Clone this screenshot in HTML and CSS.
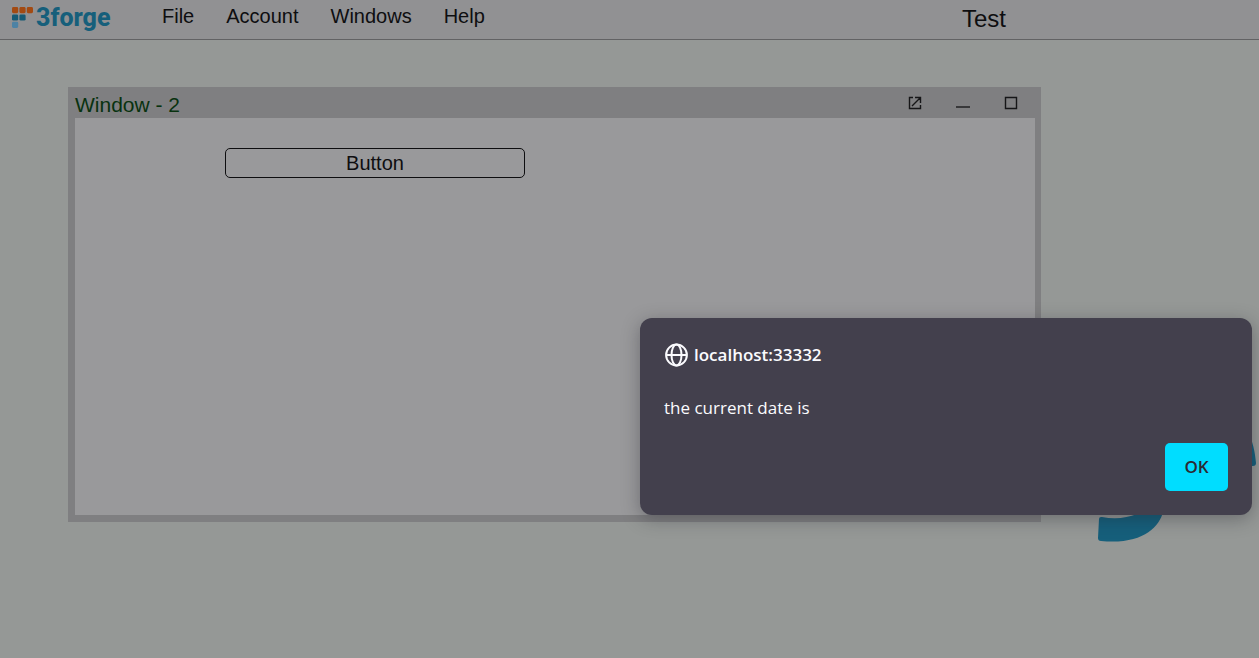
FILE: index.html
```html
<!DOCTYPE html>
<html lang="en">
<head>
<meta charset="utf-8">
<meta name="viewport" content="width=device-width, initial-scale=1">
<title>Test</title>
<link rel="stylesheet" href="styles.css">
</head>
<body>
<header class="topbar">
  <a class="brand" href="#">
    <svg class="brand-mark" viewBox="0 0 22 21" aria-hidden="true">
      <g fill="#a34a12"><rect x="0" y="0" width="6.2" height="6.2" rx="1.4"/><rect x="7.4" y="0" width="6.2" height="6.2" rx="1.4"/><rect x="14.8" y="0" width="6.2" height="6.2" rx="1.4"/></g>
      <g fill="#165a75"><rect x="0" y="7.4" width="6.2" height="6.2" rx="1.4"/><rect x="7.4" y="7.4" width="6.2" height="6.2" rx="1.4"/></g>
      <rect x="0" y="14.8" width="6.2" height="6.2" rx="1.4" fill="#4d82a4"/>
    </svg>
    <span class="brand-name">3forge</span>
  </a>
  <nav class="menu">
    <button type="button">File</button>
    <button type="button">Account</button>
    <button type="button">Windows</button>
    <button type="button">Help</button>
  </nav>
  <h1 class="layout-title">Test</h1>
</header>
<main class="desktop">
  <svg class="backdrop" viewBox="0 0 162 110" aria-hidden="true">
    <path fill="#165f7b" d="M2 81Q2 78.500 5 79C18 81.500 30 80 40 76L52 66L66 74C62 90 44 107 4 103Q1 103 1 100ZM150 -8C156 3 158 14 159 25Q159 28 156 28H145Z"/>
  </svg>
  <section class="window">
    <div class="window-head">
      <h2>Window - 2</h2>
      <div class="window-tools">
        <button type="button" aria-label="Pop out"><svg viewBox="0 0 14 14"><path d="M5 1.500H1.500V12.500H12.500V9M7 1.500H12.500V7M12.500 1.500L4 10"/></svg></button>
        <button type="button" aria-label="Minimize"><svg viewBox="0 0 14 14"><path d="M0 11H14" stroke="#38383a" stroke-width="2"/></svg></button>
        <button type="button" aria-label="Maximize"><svg viewBox="0 0 14 14"><path d="M1.500 1.500H12.500V12.500H1.500Z"/></svg></button>
      </div>
    </div>
    <div class="window-body">
      <button class="panel-button" type="button">Button</button>
    </div>
  </section>
</main>
<div class="dialog" role="alertdialog" aria-labelledby="origin" aria-describedby="message">
  <div class="origin">
    <svg viewBox="0 0 24 24" aria-hidden="true"><circle cx="12.500" cy="12" r="10.400"/><ellipse cx="12.500" cy="12" rx="5" ry="10.400"/><path d="M2 12H23"/></svg>
    <strong id="origin">localhost:33332</strong>
  </div>
  <p id="message">the current date is</p>
  <button class="ok" type="button">OK</button>
</div>
</body>
</html>
```
FILE: styles.css
```css
* { box-sizing: border-box; }

body {
  margin: 0;
  min-height: 100vh;
  display: flex;
  flex-direction: column;
  position: relative;
  overflow: hidden;
  background: #959896;
  color: #0e0e10;
  font-family: "Liberation Sans", Arial, sans-serif;
  font-size: 20px;
}

h1, h2, p { margin: 0; font-weight: 400; }

button {
  padding: 0;
  border: 0;
  background: none;
  color: inherit;
  font: inherit;
}

.topbar {
  display: flex;
  align-items: flex-start;
  height: 40px;
  padding-left: 12px;
  background: #919193;
  border-bottom: 1px solid #626264;
}

.brand {
  display: flex;
  gap: 2px;
  width: 150px;
  padding-top: 4px;
  color: #165f7b;
  text-decoration: none;
}

.brand-mark { width: 22px; height: 21px; margin-top: 3px; }

.brand-name {
  font: 800 25px/28px Roboto, sans-serif;
}

.menu {
  display: flex;
  gap: 32px;
  padding-top: 4px;
  line-height: 24px;
}

.layout-title {
  margin-left: auto;
  width: 297px;
  padding-top: 5px;
  font-size: 24px;
  line-height: 28px;
}

.desktop {
  position: relative;
  flex: 1;
  padding: 47px 218px 0 68px;
}

.backdrop {
  position: absolute;
  right: 0;
  top: 398px;
  width: 162px;
  height: 110px;
  overflow: visible;
}

.window {
  padding: 0 6px 7px 7px;
  background: #7f7f81;
}

.window-head {
  display: flex;
  justify-content: space-between;
  height: 31px;
}

.window-head h2 {
  padding-top: 4px;
  color: #08320f;
  font-size: 21px;
  line-height: 28px;
}

.window-tools {
  display: flex;
  gap: 34px;
  padding: 9px 17px 0 0;
}

.window-tools button, .window-tools svg {
  display: block;
  width: 14px;
  height: 14px;
}

.window-tools svg {
  fill: none;
  stroke: #161618;
  stroke-width: 1.4;
}

.window-body {
  min-height: 397px;
  padding: 30px 150px;
  background: #99999b;
}

.panel-button {
  display: block;
  width: 300px;
  height: 30px;
  border: 1px solid #0e0e10;
  border-radius: 5px;
}

.dialog {
  position: absolute;
  top: 318px;
  right: 7px;
  display: flex;
  flex-direction: column;
  width: 612px;
  padding: 24px;
  border-radius: 12px;
  background: #43404d;
  box-shadow: 0 4px 18px rgba(30, 30, 36, 0.35);
  color: #fbfbfe;
  font: 17px/26px "Open Sans", "Noto Sans", sans-serif;
}

.origin { display: flex; align-items: center; gap: 6px; }
.origin strong { font-weight: 600; }

.origin svg {
  width: 24px;
  height: 24px;
  fill: none;
  stroke: #fbfbfe;
  stroke-width: 2;
}

.dialog p { margin-top: 27px; }

.ok {
  align-self: flex-end;
  width: 63px;
  height: 48px;
  margin-top: 22px;
  border-radius: 5px;
  background: #00ddff;
  color: #2b2a33;
  font-weight: 600;
}
```
